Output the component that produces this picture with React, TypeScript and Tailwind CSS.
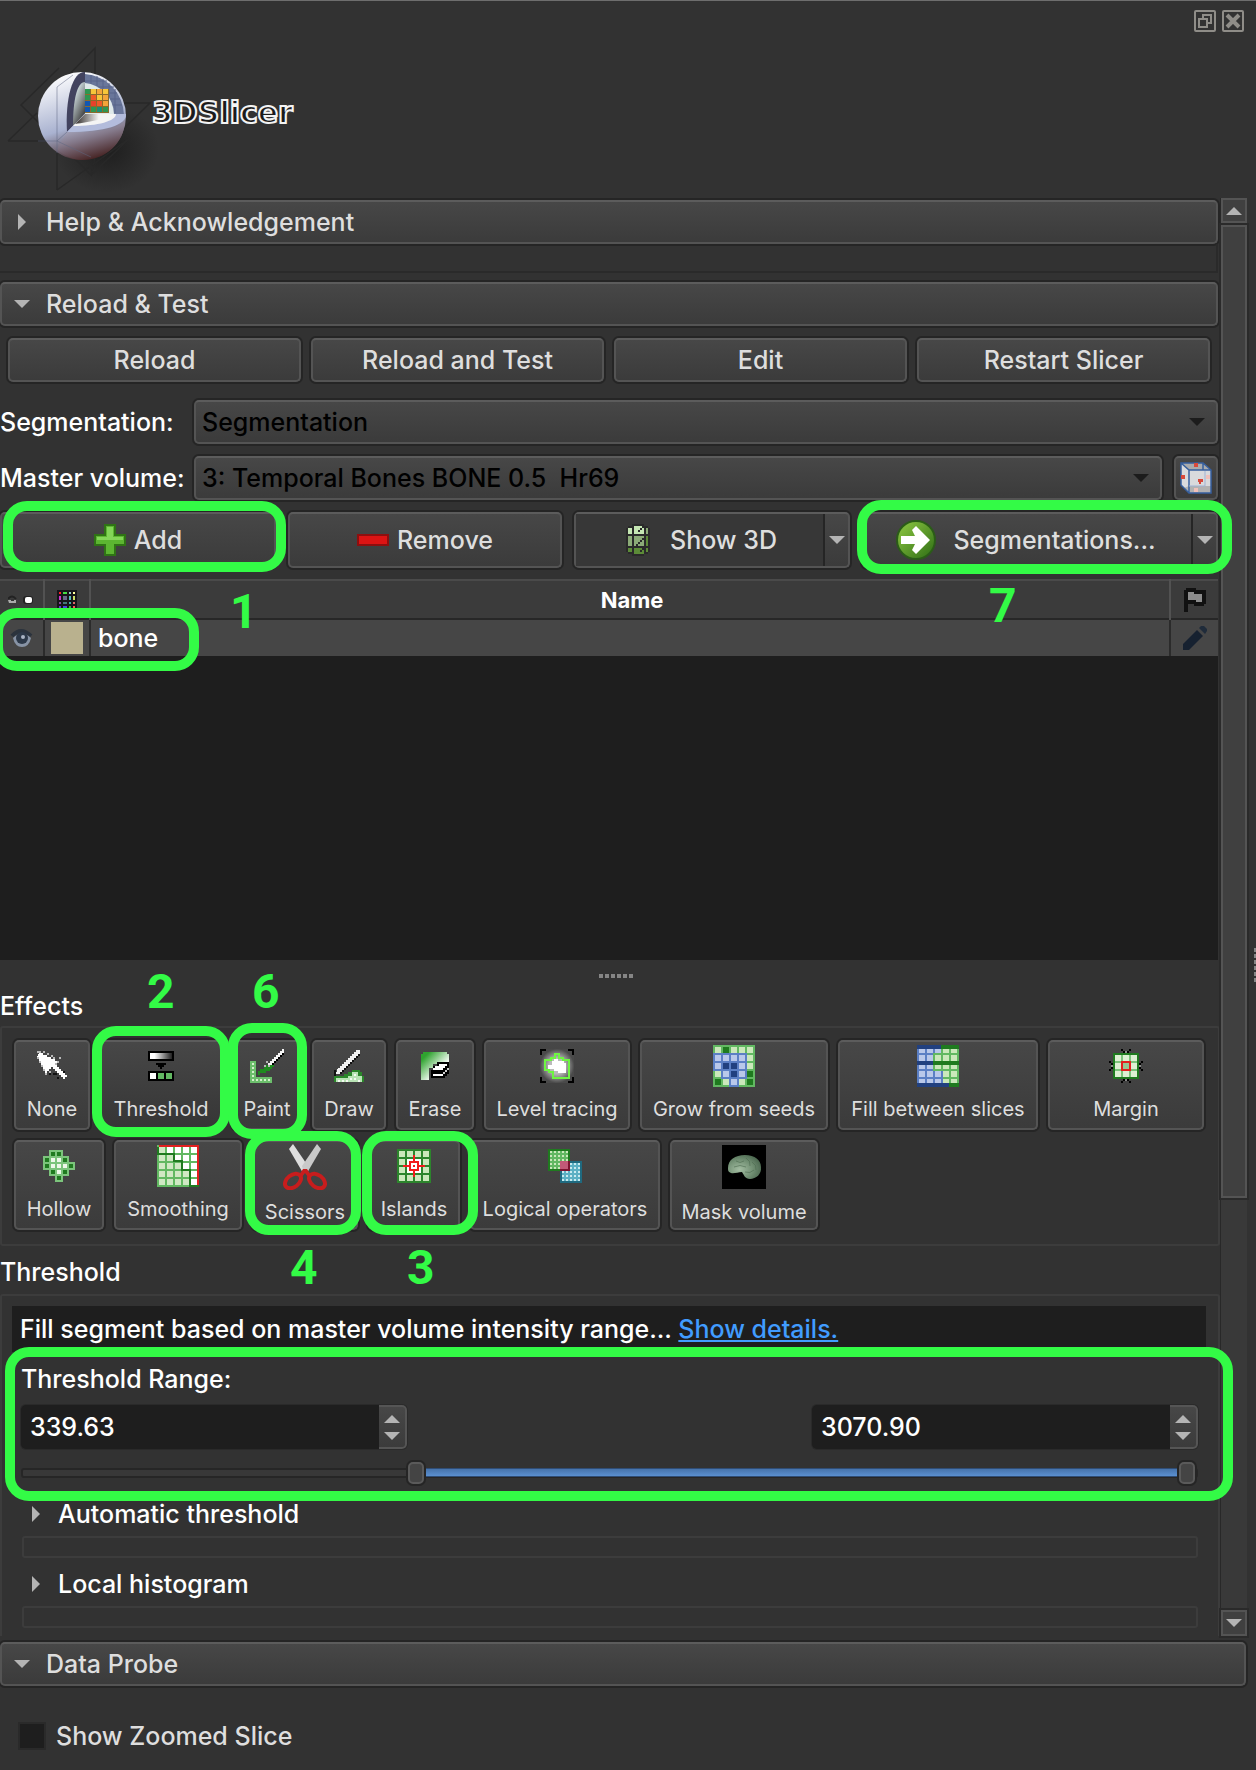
import React, { useState } from "react";

type Box = { className?: string };

const RAISED =
  "border-2 border-[#545454] border-t-[#5c5c5c] rounded-[5px] bg-linear-to-b from-[#474747] to-[#3b3b3b] shadow-[0_0_0_2px_#252525]";

function Tri({ dir, className = "" }: { dir: "up" | "down" | "right" } & Box) {
  const d = { up: "M0 8L8 0L16 8Z", down: "M0 0H16L8 8Z", right: "M0 0L8 8L0 16Z" }[dir];
  const w = dir === "right" ? 8 : 16;
  const h = dir === "right" ? 16 : 8;
  return (
    <svg width={w} height={h} viewBox={`0 0 ${w} ${h}`} className={"shrink-0 " + className} fill="currentColor" aria-hidden="true">
      <path d={d} />
    </svg>
  );
}

/* Green highlight ring with its step number, laid over the control it points at. */
function Mark({ className, n, at }: { className: string; n?: string; at?: string }) {
  return (
    <>
      <span className={"pointer-events-none absolute z-10 rounded-[24px] border-[10px] border-[#33fb46] " + className} />
      {n && (
        <span
          className={
            "pointer-events-none absolute z-10 font-[Roboto,sans-serif] text-[48px] leading-[48px] font-bold text-[#33fb46] " + at
          }
        >
          {n}
        </span>
      )}
    </>
  );
}

/* Pixel art: the viewBox counts art pixels, each drawn two screen pixels wide. */
function Art({ w, h = w, children }: { w: number; h?: number; children: React.ReactNode }) {
  return (
    <svg width={w * 2} height={h * 2} viewBox={`0 0 ${w} ${h}`} shapeRendering="crispEdges" aria-hidden="true">
      {children}
    </svg>
  );
}

const R = ({ x, y, w, h, f }: { x: number; y: number; w: number; h: number; f: string }) => (
  <rect x={x} y={y} width={w} height={h} fill={f} />
);

function Cells({ rows, pal, size, x = 0, y = 0 }: { rows: string[]; pal: Record<string, string>; size: number; x?: number; y?: number }) {
  return (
    <>
      {rows.flatMap((row, j) =>
        row.split("").map((c, i) =>
          pal[c] ? <R key={`${i}-${j}`} x={x + i * (size + 1) + 1} y={y + j * (size + 1) + 1} w={size} h={size} f={pal[c]} /> : null,
        ),
      )}
    </>
  );
}

const NoneIcon = () => (
  <Art w={15}>
    <path
      d="M0 0h2v1h-2zM3 0h1v1h-1zM0 3h1v1h-1zM1 5h1v1h-1zM5 1h1v1h-1zM8 3h1v1h-1zM11 3h1v1h-1zM10 5h1v1h-1zM9 6h1v1h-1zM2 7h1v1h-1zM3 9h1v1h-1zM4 11h1v1h-1zM6 10h1v1h-1zM7 2h1v1h-1z"
      fill="#b9b9b9"
    />
    <path d="M12 10h2v1h-2zM8 11h2v1h-2zM10 13h1v1h-1zM6 11h1v1h-1z" fill="#111" />
    <path
      d="M1 1h2v1h2v1h2v1h2v1h1v1h-1v1h1v1h1v1h1v1h1v1h1v1h1v1h-1v1h-1v-1h-1v-1h-1v-1h-1v-1h-1v-1h-1v-1h-1v1h-1v1h-1v1h-1v-2h-1v-2h-1v-2h-1v-2h-1z"
      fill="#fff"
    />
  </Art>
);

const ThresholdIcon = () => (
  <Art w={13} h={15}>
    <defs>
      <linearGradient id="ramp">
        <stop offset="0.2" stopColor="#fff" />
        <stop offset="1" stopColor="#222" />
      </linearGradient>
    </defs>
    <R x={0} y={0} w={13} h={5} f="#000" />
    <rect x="1" y="1" width="11" height="3" fill="url(#ramp)" />
    <path d="M4 6h5v1h-1v1h-1v1h-1v-1h-1v-1h-1z" fill="#000" />
    <R x={0} y={10} w={13} h={5} f="#000" />
    <R x={1} y={11} w={3} h={3} f="#fff" />
    <R x={5} y={11} w={3} h={3} f="#62b862" />
    <R x={9} y={11} w={3} h={3} f="#62b862" />
  </Art>
);

const PaintIcon = () => (
  <Art w={17}>
    <path d="M0 6h3v8h8v3H0z" fill="#6cbf6c" />
    <path d="M1 7h1v1h-1zM1 9h1v1h-1zM1 11h1v1h-1zM1 13h1v1h-1zM1 15h1v1h-1zM3 15h1v1h-1zM5 15h1v1h-1zM7 15h1v1h-1zM9 15h1v1h-1z" fill="#d5f0cd" />
    <path d="M4 11h1v-1h2v-1h1v-1h4v1h-1v1h-1v1h-2v1h-3v1h-1z" fill="#1f8a1f" />
    <path d="M9 7h1v-1h1v-1h1v-1h1v-1h1v-1h1v-1h1v-1h1v2h-1v1h-1v1h-1v1h-1v1h-1v1h-1v1h-2z" fill="#f5f5f5" />
    <path d="M17 2v1h-1v1h-1v1h-1v1h-1v1h-1v1h-1v-1h1v-1h1v-1h1v-1h1v-1h1v-1z" fill="#000" />
    <path d="M8 6h1v1h-1zM7 8h1v1h-1zM9 8h1v1h-1z" fill="#b5b5b5" />
  </Art>
);

const DrawIcon = () => (
  <Art w={15} h={16}>
    <path d="M0 13h5v-1h2v-1h2v-1h4v1h1v2h1v3H0z" fill="#2b862b" />
    <path d="M1 14h6v-1h2v-2h3v2h2v3H1z" fill="#b9e3b5" />
    <path d="M2 15h1v1h-1zM4 15h1v1h-1zM6 15h1v1h-1zM8 14h1v1h-1zM10 12h1v1h-1zM10 14h1v1h-1zM12 15h1v1h-1z" fill="#f2fbf0" />
    <path d="M2 9h1v-1h1v-1h1v-1h1v-1h1v-1h1v-1h1v-1h1v-1h1v-1h2v2h-1v1h-1v1h-1v1h-1v1h-1v1h-1v1h-1v1h-1v1h-1v1h-1v1h-2z" fill="#f1f1f1" />
    <path d="M13 2v1h-1v1h-1v1h-1v1h-1v1h-1v1h-1v1h-1v1h-1v1h-1v1h-3v1h-1v-3h1v2h2v-1h1v-1h1v-1h1v-1h1v-1h1v-1h1v-1h1v-1h1v-1h1v-1z" fill="#111" />
  </Art>
);

const EraseIcon = () => (
  <Art w={14}>
    <defs>
      <linearGradient id="era" x1="0" y1="0" x2="1" y2="1">
        <stop offset="0.15" stopColor="#2fa32f" />
        <stop offset="0.65" stopColor="#f4fbf4" />
      </linearGradient>
    </defs>
    <path d="M0 1h1v-1h12v1h1v4h-6v1h-2v2h-2v6H0z" fill="url(#era)" />
    <path d="M8 5h6v6h-1v1h-1v1h-7v-4h1v-2h2z" fill="#000" />
    <path d="M9 6h4v1h-1v1h-1v1h-5v-1h1v-1h2zM6 11h5v1h-5z" fill="#fff" />
    <path d="M13 8h1v1h-1v1h-1v1h-1v-1h1v-1h1z" fill="#ccc" />
  </Art>
);

const LevelIcon = () => (
  <Art w={17}>
    <defs>
      <radialGradient id="lvl">
        <stop offset="0.45" stopColor="#bbb" />
        <stop offset="1" stopColor="#4a4a4a" />
      </radialGradient>
    </defs>
    <R x={0} y={0} w={17} h={17} f="#000" />
    <path d="M3 0h11v1h2v2h1v11h-1v2h-2v1h-11v-1h-2v-2h-1v-11h1v-2h2z" fill="url(#lvl)" />
    <path d="M6 6h1v-1h2v1h3v1h1v5h-4v-1h-2v-1h-3v-2h2z" fill="#fff" />
    <path d="M7.500 2.500h2v2h2v1h3v9h-8v-3h-2v-1h-2v-5h3v-1h2z" fill="none" stroke="#6ef542" />
  </Art>
);

const GrowIcon = () => (
  <Art w={21}>
    <R x={0} y={0} w={21} h={21} f="#62b862" />
    <path d="M0 4h17v13h-4v4h-5v-4h-4v-4h-4z" fill="#5b7fc4" />
    <Cells size={3} rows={["LDLLL", "bbbbL", "bBBbL", "LbBbD", "DLbLD"]} pal={{ L: "#cbe8bb", D: "#1f7a1f", b: "#b9c8ea", B: "#21407f" }} />
  </Art>
);

const FillIcon = () => (
  <Art w={21}>
    <R x={0} y={0} w={21} h={21} f="#5b7fc4" />
    <path d="M12 0h9v21h-5v-2h-3v-6h-5v-9h4z" fill="#62b862" />
    {[2, 5, 10, 13, 17].map((y, j) =>
      [1, 5, 9, 13, 17].map((x) => (
        <R
          key={`${x}-${y}`}
          x={x}
          y={y}
          w={3}
          h={[2, 3, 2, 3, 2][j]}
          f={x > 9 || (x === 9 && (j === 1 || j === 2)) ? "#cbe8bb" : "#b9c8ea"}
        />
      )),
    )}
    <R x={0} y={0} w={12} h={2} f="#21407f" />
    <R x={12} y={0} w={9} h={2} f="#1f7a1f" />
    <R x={0} y={8} w={8} h={2} f="#21407f" />
    <R x={8} y={8} w={13} h={2} f="#1f7a1f" />
    <R x={0} y={19} w={16} h={2} f="#21407f" />
    <R x={16} y={19} w={5} h={2} f="#1f7a1f" />
  </Art>
);

const MarginIcon = () => (
  <Art w={17}>
    <R x={2} y={2} w={13} h={13} f="#1f7a1f" />
    <R x={3} y={3} w={11} h={11} f="#7cc47c" />
    <Cells x={2} y={2} size={3} rows={["LLL", "LCL", "LLL"]} pal={{ L: "#ddf0d3", C: "#96c793" }} />
    <rect x="6.500" y="6.500" width="4" height="4" fill="none" stroke="#e21f1f" />
    <path
      d="M6 0h1v1h-1zM7 1h1v1h-1zM9 1h1v1h-1zM10 0h1v1h-1zM6 16h1v1h-1zM7 15h1v1h-1zM9 15h1v1h-1zM10 16h1v1h-1zM0 6h1v1h-1zM1 7h1v1h-1zM1 9h1v1h-1zM0 10h1v1h-1zM16 6h1v1h-1zM15 7h1v1h-1zM15 9h1v1h-1zM16 10h1v1h-1z"
      fill="#000"
    />
    <path d="M8 1h1v1h-1zM8 15h1v1h-1zM1 8h1v1h-1zM15 8h1v1h-1z" fill="#8a8a8a" />
  </Art>
);

const HollowIcon = () => (
  <Art w={16}>
    <path d="M3 0h7v3h3v3h3v4h-3v3h-3v3h-4v-3h-3v-3h-3v-7h3z" fill="#7cc47c" />
    <Cells size={2} rows={[".DD..", "DWWD.", "DWWWD", ".DWD.", "..D.."]} pal={{ D: "#1f7a1f", W: "#eef8ea" }} />
  </Art>
);

const SmoothingIcon = () => (
  <Art w={21}>
    <R x={0} y={0} w={21} h={21} f="#62b862" />
    <Cells size={3} rows={["LWWWW", "LLWWW", "LLLWW", "LLLLW", "LLLLW"]} pal={{ L: "#d0e8c4", W: "#fff" }} />
    <path d="M0.500 1v3.500h8v3.500h4v4.500h4v8h4.500" fill="none" stroke="#1f7a1f" />
    <path d="M1 0h20v20h-1v-19h-19z" fill="#e21f1f" />
  </Art>
);

const IslandsIcon = () => (
  <Art w={17}>
    <R x={0} y={0} w={17} h={17} f="#2c852c" />
    <Cells size={3} rows={["LLLL", "LLLL", "LLLL", "LLLL"]} pal={{ L: "#cbe8bb" }} />
    <R x={5} y={5} w={7} h={7} f="#fff" />
    <rect x="6.500" y="6.500" width="4" height="4" fill="none" stroke="#f21b1b" />
    <path d="M8 3h1v3h-1zM8 11h1v3h-1zM3 8h3v1h-3zM11 8h3v1h-3zM8 8h1v1h-1z" fill="#f21b1b" />
  </Art>
);

const LogicalIcon = () => (
  <Art w={17}>
    <R x={0} y={0} w={11} h={11} f="#1f7a1f" />
    <R x={1} y={1} w={9} h={9} f="#62b862" />
    <R x={6} y={6} w={11} h={11} f="#1f6a80" />
    <R x={7} y={7} w={9} h={9} f="#5bb0c4" />
    {[1, 3, 5, 7, 9].map((a) => [1, 3, 5, 7, 9].map((b) => <R key={`${a}${b}`} x={a} y={b} w={1} h={1} f="#cbe8bb" />))}
    {[7, 9, 11, 13, 15].map((a) => [7, 9, 11, 13, 15].map((b) => <R key={`${a}${b}`} x={a} y={b} w={1} h={1} f="#c8eaf0" />))}
    <R x={6} y={6} w={5} h={5} f="#7d1430" />
    <R x={6} y={6} w={4} h={4} f="#c25a78" />
  </Art>
);

const ScissorsIcon = () => (
  <svg width="44" height="46" viewBox="0 0 44 46" aria-hidden="true">
    <path d="M6 5L10 0L25 22L23 29L20 29Z" fill="#dedede" />
    <path d="M38 5L34 0L19 22L21 29L24 29Z" fill="#c9c9c9" />
    <ellipse cx="10" cy="37" rx="9" ry="6" transform="rotate(-38 10 37)" fill="none" stroke="#c81d1d" strokeWidth="4" />
    <ellipse cx="34" cy="37" rx="9" ry="6" transform="rotate(38 34 37)" fill="none" stroke="#c81d1d" strokeWidth="4" />
    <path d="M20 25h4l4 6l-3 2l-3 -4l-3 4l-3 -2z" fill="#c81d1d" />
  </svg>
);

const MaskIcon = () => (
  <svg width="44" height="44" viewBox="0 0 44 44" aria-hidden="true">
    <defs>
      <radialGradient id="brain" cx="0.35" cy="0.6" r="0.7">
        <stop offset="0" stopColor="#a3bda2" />
        <stop offset="0.6" stopColor="#6f8d71" />
        <stop offset="1" stopColor="#4a664e" />
      </radialGradient>
    </defs>
    <rect width="44" height="44" fill="#000" />
    <path d="M6 23C6 15 13 10 23 10C33 10 39 15 39 22C40 29 34 34 28 34C23 34 22 30 20 27C16 27 12 29 9 28C6 27 6 25 6 23Z" fill="url(#brain)" />
    <path d="M14 16q4 3 8 0M24 13q5 3 4 8M12 22q6 -3 12 0M30 17q5 3 4 8M23 27q5 2 9 -2" fill="none" stroke="#4d6a50" strokeOpacity="0.6" />
  </svg>
);

const LogoIcon = () => (
  <svg width="156" height="150" viewBox="0 0 156 150" className="shrink-0" aria-hidden="true">
    <defs>
      <radialGradient id="shade">
        <stop offset="0" stopColor="#151515" stopOpacity="0.7" />
        <stop offset="1" stopColor="#151515" stopOpacity="0" />
      </radialGradient>
      <linearGradient id="ball" x1="0.3" y1="0" x2="0.6" y2="1">
        <stop offset="0" stopColor="#fff" />
        <stop offset="0.6" stopColor="#a9b2d0" />
        <stop offset="1" stopColor="#3c1a18" />
      </linearGradient>
      <linearGradient id="bowl" x1="0.2" y1="0" x2="0.7" y2="1">
        <stop offset="0" stopColor="#b8bfda" />
        <stop offset="0.45" stopColor="#84798a" />
        <stop offset="1" stopColor="#3c1512" />
      </linearGradient>
      <linearGradient id="hole" x1="0" y1="0" x2="0.6" y2="1">
        <stop offset="0.3" stopColor="#c5d2d4" />
        <stop offset="1" stopColor="#3a3a3a" />
      </linearGradient>
      <linearGradient id="floor">
        <stop offset="0.1" stopColor="#4a4644" />
        <stop offset="0.7" stopColor="#f4f4f4" />
      </linearGradient>
    </defs>
    <ellipse cx="102" cy="104" rx="52" ry="44" fill="url(#shade)" />
    <g fill="none" stroke="#282828" strokeWidth="1.500">
      <path d="M52 145V42L90 3V58H145L90 112L86 130L16 60L54 23" />
      <path d="M52 145L125 93L86 130M3 96H60M3 96L32 68" />
    </g>
    <circle cx="77" cy="71" r="44" fill="url(#ball)" />
    <path d="M80 29A42 42 0 0 1 119 70L80 72Z" fill="#69769a" />
    <path d="M86 30V42M92 31V44M98 34V47M104 38V52M110 44V68M80 36H102M80 42H109M100 48H112M104 54H115M107 60H117" stroke="#59658a" />
    <path d="M80 38A32 32 0 0 1 109 69L80 72Z" fill="#dfe9ea" />
    <path d="M80 27C68 26 60 52 62 87L80 68Z" fill="#42435f" />
    <path d="M80 37C72 37 68 55 68 81L80 68Z" fill="url(#hole)" />
    <path d="M62 87L80 69H121C122 80 100 87 62 87Z" fill="#b3bcdc" />
    <path d="M68 81L80 69H111C111 76 93 81 68 81Z" fill="#f4f4f4" />
    <path d="M70 79L80 69H104C102 74 84 77 70 79Z" fill="url(#floor)" />
    <rect x="80" y="44" width="24" height="24" fill="#8b6a2c" />
    <Cells
      x={79}
      y={43}
      size={5}
      rows={["GYOY", "GRYO", "BrRO", "BGTG"]}
      pal={{ G: "#2f9650", Y: "#f6c63a", O: "#f3a43a", R: "#f05a28", r: "#e8412a", B: "#1457b0", T: "#1b8f74" }}
    />
    <path d="M62 87C95 89 116 82 120 76C119 98 101 115 77 115C68 115 58 110 52 104Z" fill="url(#bowl)" />
    <path d="M52 96V42L68 30M52 96L62 87M33 96H52L86 112M52 96V108" fill="none" stroke="#5d6580" strokeOpacity="0.5" />
  </svg>
);

const CubeIcon = () => (
  <svg width="32" height="32" viewBox="0 0 32 32" aria-hidden="true">
    <path d="M1 1H23L31 8V31H9L1 23Z" fill="#d9dadd" />
    <path d="M1 1H23L31 8H9Z" fill="#a9abad" />
    <path d="M9 24H31V31H9L4 26Z" fill="#b2b2b2" />
    <path d="M1 1H23L31 8V31H9L1 23ZM1 1L9 8H31M9 8V31M23 1V8" fill="none" stroke="#365f9e" strokeWidth="1.500" />
    <path d="M25 9V24M9 24H25" stroke="#9fb2d4" />
    <path d="M14 1h4v4h-4zM1 13h4v4h-4zM18 17h5v3h-2v2h-2v-2h-1z" fill="#d8493c" />
    <path d="M26 13h4v4h-4zM14 26h4v4h-4z" fill="#f0c0ba" />
  </svg>
);

const PlusIcon = () => (
  <svg width="32" height="32" viewBox="0 0 32 32" aria-hidden="true">
    <path d="M11 1H21V11H31V21H21V31H11V21H1V11H11Z" fill="#5cb531" stroke="#2f7315" strokeWidth="2" />
    <path d="M13 3H19V13H29V16H3V13H13Z" fill="#83d658" />
  </svg>
);

const MinusIcon = () => (
  <svg width="32" height="12" viewBox="0 0 32 12" aria-hidden="true">
    <rect x="1" y="1" width="30" height="10" fill="#dc1414" stroke="#8d0f0f" strokeWidth="2" />
  </svg>
);

const Show3DIcon = () => (
  <Art w={12} h={16}>
    <path d="M3 0h6v1h2v1h1v12h-1v1h-2v1h-6v-1h-2v-1h-1v-12h1v-1h2z" fill="#2a2a2a" />
    <path d="M1 2h2v3h-2zM4 1h5v4h-5z" fill="#c5e6b3" />
    <path d="M10 2h1v3h-1zM1 6h2v5h-2zM4 6h5v5h-5z" fill="#8cab78" />
    <path d="M10 6h1v5h-1zM1 12h2v2h-2zM4 12h5v3h-5zM10 12h1v2h-1z" fill="#5c8b38" />
    <path d="M8 1h1v1h-1zM7 2h1v1h-1zM6 3h1v1h-1zM8 7h1v1h-1zM7 8h1v1h-1zM6 9h1v1h-1zM5 10h1v1h-1zM8 12h1v1h-1zM7 13h1v1h-1z" fill="#2a2a2a" />
  </Art>
);

const GoIcon = () => (
  <svg width="42" height="44" viewBox="0 0 42 44" aria-hidden="true">
    <defs>
      <linearGradient id="go" x1="0" y1="0" x2="1" y2="1">
        <stop offset="0.2" stopColor="#7db83a" />
        <stop offset="1" stopColor="#2c6b14" />
      </linearGradient>
    </defs>
    <circle cx="21" cy="22" r="19" fill="url(#go)" stroke="#2b5c18" strokeWidth="2" />
    <path d="M6 18H20L17 12L21 8L35 22L21 36L17 32L20 26H6Z" fill="#fff" />
  </svg>
);

const EyeIcon = () => (
  <svg width="24" height="20" viewBox="0 0 24 20" className="mx-auto" aria-hidden="true">
    <path d="M2 8Q11 -2 21 8" fill="none" stroke="#2b333d" strokeWidth="4" />
    <path d="M3 10Q12 1 21 10Q19 19 12 19Q5 19 3 10Z" fill="#8793a5" />
    <circle cx="12" cy="10" r="6" fill="#2c3848" />
    <circle cx="13" cy="9" r="2" fill="#aab4c4" />
  </svg>
);

const EyesIcon = () => (
  <svg width="26" height="10" viewBox="0 0 26 10" className="ml-2" aria-hidden="true">
    <path d="M0 4Q4 -1 8 4" fill="none" stroke="#222" strokeWidth="2" />
    <path d="M0 5H8V8H1Z" fill="#aaa" />
    <path d="M3 4h3v2h-3z" fill="#333" />
    <rect x="15" y="1" width="10" height="8" rx="3" fill="#222" />
    <rect x="17" y="2" width="7" height="6" rx="2" fill="#fff" />
  </svg>
);

const PaletteIcon = () => (
  <Art w={10}>
    <R x={0} y={0} w={10} h={10} f="#16141a" />
    {["#f22", "#4d4", "#9cc", "#ff9", "#c3c", "#668", "#5bb", "#cd6", "#849", "#477", "#4aa", "#d66", "#63c", "#44d", "#3b3", "#f55"].map((c, i) => (
      <R key={i} x={[1, 3, 6, 8][i % 4]} y={[1, 3, 6, 8][Math.floor(i / 4)]} w={i % 4 === 1 ? 2 : 1} h={i >= 4 && i < 8 ? 2 : 1} f={c} />
    ))}
  </Art>
);

const FlagIcon = () => (
  <Art w={11} h={12}>
    <path d="M0 1h1v-1h5v1h5v7h-1v1h-5v-1h-3v4h-2z" fill="#111" />
    <path d="M2 2h3v1h4v4h-3v-1h-4z" fill="#8c8c8c" />
  </Art>
);

const PencilIcon = () => (
  <svg width="24" height="24" viewBox="0 0 24 24" className="mx-auto" aria-hidden="true">
    <path d="M0 24V18L14 4L20 10L6 24Z" fill="#162130" />
    <path d="M16 2L18 0H21L24 3V5L22 8Z" fill="#1f2b3a" />
  </svg>
);

function Section({ open, children }: { open?: boolean; children: string }) {
  return (
    <button className={`flex h-11 w-full items-center rounded-[5px] pl-3 text-left text-[#dedede] ${RAISED}`}>
      <span className="flex w-8 justify-start text-[#b4b4b4]">
        {open ? <Tri dir="down" /> : <Tri dir="right" className="ml-1" />}
      </span>
      {children}
    </button>
  );
}

function Effect({ w, label, icon, tall, on, children }: { w: string; label: string; icon: React.ReactNode; tall?: boolean; on?: boolean; children?: React.ReactNode }) {
  return (
    <div className={`relative h-[90px] ${w}`}>
      <button
        className={`flex size-full flex-col items-center text-xl leading-6 font-normal whitespace-nowrap text-[#dedede] ${RAISED} ${on ? "from-[#363636] to-[#363636]" : ""}`}
      >
        <span className={`flex shrink-0 items-center ${tall ? "h-[50px]" : "h-[47px]"}`}>{icon}</span>
        <span className="mt-2">{label}</span>
      </button>
      {children}
    </div>
  );
}

function Spin({ label, value }: { label: string; value: string }) {
  const [v, setV] = useState(value);
  const step = (d: number) => setV((Number(v) + d).toFixed(2));
  return (
    <div className="flex h-11 w-[386px] rounded-[5px] bg-[#1e1e1e] shadow-[0_0_0_1px_#2a2a2a]">
      <input aria-label={label} value={v} onChange={(e) => setV(e.target.value)} className="min-w-0 flex-1 bg-transparent pl-[9px] text-white outline-none" />
      <div className="flex w-7 flex-col rounded-r-[5px] border-2 border-l-0 border-[#555] bg-linear-to-b from-[#474747] to-[#3b3b3b] text-[#b4b4b4]">
        <button aria-label="Increase" onClick={() => step(1)} className="flex flex-1 items-end justify-center pb-1">
          <Tri dir="up" />
        </button>
        <button aria-label="Decrease" onClick={() => step(-1)} className="flex flex-1 items-start justify-center pt-[5px]">
          <Tri dir="down" />
        </button>
      </div>
    </div>
  );
}

const RANGE =
  "pointer-events-none absolute inset-0 h-[22px] w-full appearance-none bg-transparent [&::-webkit-slider-thumb]:pointer-events-auto [&::-webkit-slider-thumb]:h-[22px] [&::-webkit-slider-thumb]:w-4 [&::-webkit-slider-thumb]:appearance-none [&::-webkit-slider-thumb]:rounded-[5px] [&::-webkit-slider-thumb]:border-2 [&::-webkit-slider-thumb]:border-[#5a5a5a] [&::-webkit-slider-thumb]:bg-[#444] [&::-webkit-slider-thumb]:shadow-[0_0_0_2px_#252525]";

function RangeSlider() {
  const [lo, setLo] = useState(333);
  const [hi, setHi] = useState(997);
  return (
    <div className="relative mt-[13px] h-[22px]">
      <div className="pt-[6px]">
        <div className="h-[10px] rounded-[3px] border-2 border-[#262626] bg-[#383838]">
          <div
            className="-mt-[2px] h-[9px] border-y border-[#2f4d76] bg-linear-to-b from-[#4673ab] to-[#5b90d0]"
            style={{ marginLeft: `${lo / 10}%`, width: `${(hi - lo) / 10}%` }}
          />
        </div>
      </div>
      <input type="range" aria-label="Lower threshold" min={0} max={1000} value={lo} onChange={(e) => setLo(Math.min(+e.target.value, hi))} className={RANGE} />
      <input type="range" aria-label="Upper threshold" min={0} max={1000} value={hi} onChange={(e) => setHi(Math.max(+e.target.value, lo))} className={RANGE} />
    </div>
  );
}

function Fold({ children, className }: { children: string; className: string }) {
  return (
    <div className={className}>
      <button className="flex h-[30px] items-center text-white">
        <Tri dir="right" className="mr-[18px] ml-[10px] text-[#b4b4b4]" />
        {children}
      </button>
      <div className="mt-[7px] h-[22px] rounded-[3px] border-2 border-[#3c3c3c]" />
    </div>
  );
}

function Combo({ id, value }: { id: string; value: string }) {
  return (
    <div className="relative min-w-0 flex-1">
      <select id={id} className={`h-11 w-full appearance-none pl-[6px] whitespace-pre text-black ${RAISED}`}>
        <option>{value}</option>
      </select>
      <Tri dir="down" className="pointer-events-none absolute top-[18px] right-[13px] text-[#1c1c1c]" />
    </div>
  );
}

export default function App() {
  return (
    <main className="flex min-h-screen flex-col overflow-hidden border-t border-[#6e6e6e] bg-[#323232] font-[Inter,sans-serif] text-[25px] leading-[30px] font-medium text-white">
      <header className="flex h-[197px] items-start">
        <div className="flex flex-1 items-center pt-[44px] pl-[5px]">
          <LogoIcon />
          <h1 className="-ml-[9px] pb-[14px] font-['DejaVu_Sans',sans-serif] text-[30px] leading-8 font-bold text-[#1a1a1a] [-webkit-text-stroke:2px_#f4f4f4]">
            3DSlicer
          </h1>
        </div>
        <div className="flex gap-[6px] pt-[9px] pr-3">
          <button aria-label="Undock">
            <svg width="22" height="22" viewBox="0 0 22 22" fill="none" stroke="#8f8d88" strokeWidth="2">
              <rect x="1" y="1" width="20" height="20" rx="1" />
              <path d="M5 9H13V17H5ZM9 8V5H17V13H14" />
            </svg>
          </button>
          <button aria-label="Close">
            <svg width="22" height="22" viewBox="0 0 22 22" fill="none" stroke="#8f8d88" strokeWidth="2">
              <rect x="1" y="1" width="20" height="20" rx="1" />
              <path d="M5 5L17 17M17 5L5 17" strokeWidth="4" />
            </svg>
          </button>
        </div>
      </header>

      <div className="flex pr-[9px]">
        <div className="min-w-0 flex-1">
          <div className="pt-[2px] pr-[2px]">
            <Section>Help &amp; Acknowledgement</Section>
            <div className="mb-[9px] h-[29px] border-r-2 border-b-2 border-[#2a2a2a]" />
            <Section open>Reload &amp; Test</Section>

            <div className="mt-3 grid grid-cols-4 gap-[10px] pr-2 pl-2">
              {["Reload", "Reload and Test", "Edit", "Restart Slicer"].map((t) => (
                <button key={t} className={`h-11 text-[#dedede] ${RAISED}`}>
                  {t}
                </button>
              ))}
            </div>

            <div className="mt-[18px] flex items-center">
              <label htmlFor="seg" className="w-[194px] shrink-0">
                Segmentation:
              </label>
              <Combo id="seg" value="Segmentation" />
            </div>
            <div className="mt-3 flex items-center">
              <label htmlFor="vol" className="w-[194px] shrink-0 whitespace-nowrap">
                Master volume:
              </label>
              <Combo id="vol" value={"3: Temporal Bones BONE 0.5 \u00a0Hr69"} />
              <button aria-label="Specify geometry" className={`ml-3 flex size-11 items-center justify-center ${RAISED}`}>
                <CubeIcon />
              </button>
            </div>

            <div className="mt-3 flex h-14 gap-3 text-[#dedede]">
              <div className="relative w-[276px]">
                <button className={`flex size-full items-center justify-center gap-2 ${RAISED}`}>
                  <PlusIcon />
                  Add
                </button>
                <Mark className="-top-[11px] -right-[10px] -bottom-1 left-[3px]" n="1" at="top-[76px] left-[230px]" />
              </div>
              <button className={`flex w-[274px] items-center justify-center gap-2 ${RAISED}`}>
                <MinusIcon />
                Remove
              </button>
              <div className={`flex w-[276px] ${RAISED}`}>
                <button className="flex flex-1 items-center justify-center gap-5 bg-[#373737] pl-1">
                  <Show3DIcon />
                  Show 3D
                </button>
                <button aria-label="Show 3D options" className="flex w-[25px] items-center justify-center border-l-2 border-[#252525] text-[#b4b4b4]">
                  <Tri dir="down" />
                </button>
              </div>
              <div className={`relative flex flex-1 ${RAISED}`}>
                <button className="flex flex-1 items-center justify-center gap-4 pr-1">
                  <GoIcon />
                  Segmentations...
                </button>
                <button aria-label="Segmentations options" className="flex w-[25px] items-center justify-center border-l-2 border-[#252525] text-[#b4b4b4]">
                  <Tri dir="down" />
                </button>
                <Mark className="-top-[14px] -right-4 -bottom-2 -left-[7px]" n="7" at="top-[68px] left-[125px]" />
              </div>
            </div>
          </div>

          <div className="relative mt-[11px] mr-[2px] bg-[#1e1e1e]">
            <table className="w-full table-fixed border-collapse">
              <colgroup>
                <col className="w-[44px]" />
                <col className="w-[46px]" />
                <col />
                <col className="w-[48px]" />
              </colgroup>
              <thead>
                <tr className="h-[39px] border-t-2 border-b-2 border-t-[#4a4a4a] border-b-[#272727] bg-[#3b3b3b]">
                  <th aria-label="Visibility" className="border-r-2 border-[#525252] p-0">
                    <EyesIcon />
                  </th>
                  <th aria-label="Color" className="border-r-2 border-[#525252] p-0">
                    <span className="flex justify-center">
                      <PaletteIcon />
                    </span>
                  </th>
                  <th className="p-0 pl-1 text-[22px] font-bold">Name</th>
                  <th aria-label="Status" className="border-l-2 border-[#525252] p-0">
                    <span className="flex justify-center">
                      <FlagIcon />
                    </span>
                  </th>
                </tr>
              </thead>
              <tbody>
                <tr className="h-[37px] bg-[#464646]">
                  <td className="border-r-2 border-[#2b2b2b] p-0">
                    <EyeIcon />
                  </td>
                  <td className="border-r-2 border-[#2b2b2b] p-0">
                    <div className="mx-auto size-8 bg-[#b9b18e]" />
                  </td>
                  <td className="p-0 pl-[7px]">bone</td>
                  <td className="border-l-2 border-[#2b2b2b] p-0">
                    <PencilIcon />
                  </td>
                </tr>
              </tbody>
            </table>
            <Mark className="top-[29px] -left-[7px] h-[63px] w-[206px]" />
            <div className="h-[304px]" />
          </div>

          <div className="flex h-[31px] items-center justify-center gap-[2px] pl-3">
            {[0, 1, 2, 3, 4, 5].map((i) => (
              <span key={i} className="size-1 bg-[#858585]" />
            ))}
          </div>

          <h2 className="h-[35px]">Effects</h2>
          <section className="rounded-[3px] border-2 border-[#3c3c3c] p-3 pb-[14px]">
            <div className="flex gap-[10px]">
              <Effect w="w-[76px]" label="None" icon={<NoneIcon />} />
              <Effect w="w-[122px]" label="Threshold" icon={<ThresholdIcon />} on>
                <Mark className="-top-[14px] -right-2 -bottom-[7px] -left-2" n="2" at="-top-[72px] left-[47px]" />
              </Effect>
              <Effect w="w-[70px]" label="Paint" icon={<PaintIcon />}>
                <Mark className="-top-[17px] -right-[5px] -bottom-[9px] -left-1" n="6" at="-top-[72px] left-5" />
              </Effect>
              <Effect w="w-[74px]" label="Draw" icon={<DrawIcon />} />
              <Effect w="w-[78px]" label="Erase" icon={<EraseIcon />} />
              <Effect w="w-[146px]" label="Level tracing" icon={<LevelIcon />} />
              <Effect w="w-[188px]" label="Grow from seeds" icon={<GrowIcon />} />
              <Effect w="w-[200px]" label="Fill between slices" icon={<FillIcon />} />
              <Effect w="w-[156px]" label="Margin" icon={<MarginIcon />} />
            </div>
            <div className="mt-[10px] flex gap-[10px]">
              <Effect w="w-[90px]" label="Hollow" icon={<HollowIcon />} />
              <Effect w="w-[128px]" label="Smoothing" icon={<SmoothingIcon />} />
              <Effect w="w-[106px]" label="Scissors" icon={<ScissorsIcon />} tall>
                <Mark className="-top-[9px] -right-[3px] -bottom-[5px] -left-[7px]" n="4" at="top-[104px] left-[38px]" />
              </Effect>
              <Effect w="w-[92px]" label="Islands" icon={<IslandsIcon />}>
                <Mark className="-top-[9px] -right-[18px] -bottom-[5px] -left-[6px]" n="3" at="top-[104px] left-[39px]" />
              </Effect>
              <Effect w="w-[190px]" label="Logical operators" icon={<LogicalIcon />} />
              <Effect w="w-[148px]" label="Mask volume" icon={<MaskIcon />} tall />
            </div>
          </section>

          <h2 className="h-12 pt-[11px]">Threshold</h2>
          <section className="rounded-t-[3px] border-2 border-b-0 border-[#3c3c3c] pt-[10px] pr-3 pb-2 pl-[10px]">
            <p className="h-[46px] bg-[#1e1e1e] pt-2 pl-2">
              Fill segment based on master volume intensity range...{" "}
              <a href="#details" className="text-[#419cff] underline">
                Show details.
              </a>
            </p>
            <div className="relative pr-2 pl-[9px]">
              <h3 className="pt-3">Threshold Range:</h3>
              <div className="mt-[11px] flex justify-between">
                <Spin label="Threshold minimum" value="339.63" />
                <Spin label="Threshold maximum" value="3070.90" />
              </div>
              <RangeSlider />
              <Mark className="-top-[5px] -right-[27px] -bottom-[17px] -left-[7px]" />
            </div>
            <div className="pr-2 pl-[10px]">
              <Fold className="mt-[15px]">Automatic threshold</Fold>
              <Fold className="mt-[11px]">Local histogram</Fold>
            </div>
          </section>
        </div>

        <div className="flex w-[27px] flex-col gap-[2px] border-l border-[#282828] bg-[#393939] text-[#b4b4b4]">
          <button aria-label="Scroll up" className="flex h-[25px] items-center justify-center border-2 border-[#545454] bg-[#404040]">
            <Tri dir="up" />
          </button>
          <div className="grow-[973] basis-0 border-2 border-[#545454] bg-[#404040] shadow-[0_0_0_2px_#2a2a2a]" />
          <div className="grow-[409] basis-0" />
          <button aria-label="Scroll down" className="flex h-[26px] items-center justify-center border-2 border-[#545454] bg-[#404040] shadow-[0_0_0_2px_#2a2a2a]">
            <Tri dir="down" />
          </button>
        </div>
        <div className="relative">
          <div className="absolute top-[750px] left-[7px] flex flex-col gap-[2px]">
            {[0, 1, 2, 3, 4, 5].map((i) => (
              <span key={i} className="size-1 bg-[#858585]" />
            ))}
          </div>
        </div>
      </div>

      <div className="mt-[6px] pr-[10px]">
        <Section open>Data Probe</Section>
      </div>
      <label className="mt-[35px] ml-[18px] flex items-center gap-[10px] text-[#dedede]">
        <input type="checkbox" className="size-7 appearance-none border-2 border-[#2a2a2a] bg-[#1e1e1e] checked:bg-[#5588c7]" />
        Show Zoomed Slice
      </label>
    </main>
  );
}
